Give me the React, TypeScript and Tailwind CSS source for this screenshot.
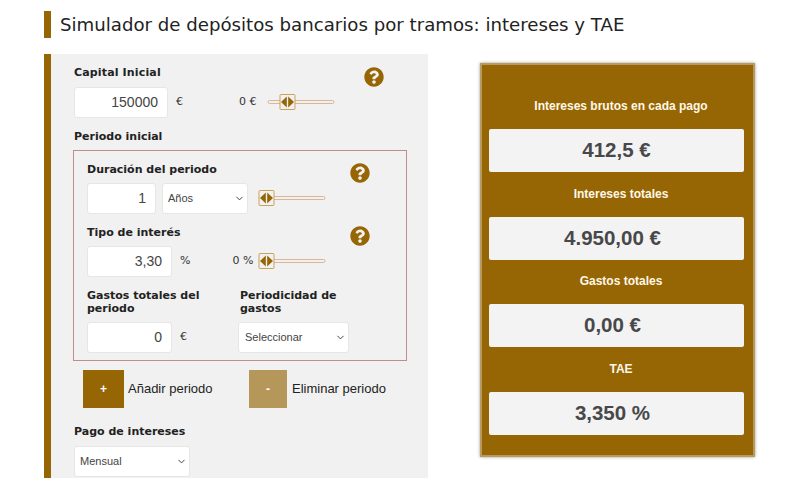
import { FaQuestionCircle } from "react-icons/fa";
import { ChevronDown } from "lucide-react";

const labelCls = "block font-['DejaVu_Sans',sans-serif] text-[11px] leading-[13px] font-bold text-[#222]";
const inputCls =
  "h-[31px] rounded-[3px] bg-white border border-[#e6e6e6] text-right pr-[9px] pb-[2px] font-['Liberation_Sans',sans-serif] text-[14px] text-[#444] outline-none";
const unitCls = "font-['DejaVu_Sans',sans-serif] text-[11px] text-[#333]";

function Select({ options, wrap, pad }: { options: string[]; wrap: string; pad: string }) {
  return (
    <div className={`relative h-[31px] ${wrap}`}>
      <select
        defaultValue={options[0]}
        className={`w-full h-full appearance-none rounded-[3px] bg-white border border-[#e6e6e6] font-['Liberation_Sans',sans-serif] text-[11px] text-[#444] outline-none ${pad}`}
      >
        {options.map((o) => (
          <option key={o}>{o}</option>
        ))}
      </select>
      <ChevronDown size={11} strokeWidth={2} className="absolute right-[3px] top-[10px] text-[#333] pointer-events-none" />
    </div>
  );
}

function Slider({ thumb, className }: { thumb: number; className: string }) {
  return (
    <svg width="68" height="18" viewBox="0 0 68 18" className={className}>
      <rect x="1" y="7.5" width="66" height="3" rx="1.5" fill="#f6efe6" stroke="#d6b8a0" strokeWidth="1" />
      <rect x={thumb} y="1.5" width="15" height="15" rx="1" fill="#f1f1f1" stroke="#c9a35e" strokeWidth="1" />
      <path
        d={`M${thumb + 6.8} 3.5 L${thumb + 1} 9 L${thumb + 6.8} 14.5 Z M${thumb + 8.2} 3.5 L${thumb + 14} 9 L${thumb + 8.2} 14.5 Z`}
        fill="#966605"
      />
    </svg>
  );
}

function Help({ className = "" }: { className?: string }) {
  return <FaQuestionCircle size={20} className={`text-[#966605] shrink-0 ${className}`} />;
}

function Result({ label, value, top, valuePad }: { label: string; value: string; top: string; valuePad: string }) {
  return (
    <div className={top}>
      <p className="pl-[9px] text-center font-['Liberation_Sans',sans-serif] text-[12px] leading-[14px] font-bold text-[#fff8e8]">{label}</p>
      <div
        className={`mt-[16px] h-[43px] rounded-[2px] bg-[#f3f3f3] flex items-center justify-center font-['Liberation_Sans',sans-serif] text-[20.5px] font-bold text-[#48484a] ${valuePad}`}
      >
        {value}
      </div>
    </div>
  );
}

export default function App() {
  return (
    <div className="w-[800px] h-[478px] overflow-hidden bg-white pl-[44px] pt-[11px]">
      <div className="flex items-center h-[27px] border-l-[7px] border-[#966605] pl-[9px]">
        <h1 className="font-['DejaVu_Sans',sans-serif] text-[18.16px] text-[#222] font-normal whitespace-nowrap">
          Simulador de depósitos bancarios por tramos: intereses y TAE
        </h1>
      </div>

      <div className="flex mt-[16px] items-start">
        <div className="w-[384px] h-[424px] shrink-0 border-l-[7px] border-[#966605] bg-[#f1f1f1] pl-[23px] pt-[12px]">
          <div className="flex items-start h-[19px] w-[310px] justify-between">
            <label className={`${labelCls} tracking-[0.15px]`}>Capital Inicial</label>
            <Help className="mt-[1px]" />
          </div>
          <div className="flex items-center mt-[2px]">
            <input readOnly value="150000" className={`${inputCls} w-[94px]`} />
            <span className={`${unitCls} ml-[8px]`}>€</span>
            <span className={`${unitCls} ml-[56px]`}>0 €</span>
            <Slider thumb={13} className="ml-[10px] -mt-[2px]" />
          </div>

          <label className={`${labelCls} mt-[12px]`}>Periodo inicial</label>

          <div className="mt-[7px] -ml-px w-[334px] h-[211px] border border-[#bb8f8f] pl-[13px] pt-[12px]">
            <div className="flex items-start h-[19px] w-[283px] justify-between">
              <label className={labelCls}>Duración del periodo</label>
              <Help />
            </div>
            <div className="flex items-center mt-[1px]">
              <input readOnly value="1" className={`${inputCls} w-[69px]`} />
              <Select options={["Años", "Meses"]} wrap="w-[86px] ml-[6px]" pad="pl-[5px]" />
              <Slider thumb={1} className="ml-[10px] -mt-[2px]" />
            </div>

            <div className="flex items-start h-[19px] w-[283px] justify-between mt-[12px]">
              <label className={labelCls}>Tipo de interés</label>
              <Help />
            </div>
            <div className="flex items-center mt-[1px]">
              <input readOnly value="3,30" className={`${inputCls} w-[85px]`} />
              <span className={`${unitCls} ml-[8px]`}>%</span>
              <span className={`${unitCls} ml-[42px]`}>0 %</span>
              <Slider thumb={1} className="ml-[5px] -mt-[1px]" />
            </div>

            <div className="flex mt-[12px]">
              <label className={`${labelCls} w-[153px]`}>
                Gastos totales del
                <br />
                periodo
              </label>
              <label className={labelCls}>
                Periodicidad de
                <br />
                gastos
              </label>
            </div>
            <div className="flex items-center mt-[7px]">
              <input readOnly value="0" className={`${inputCls} w-[85px]`} />
              <span className={`${unitCls} ml-[8px]`}>€</span>
              <Select options={["Seleccionar", "Mensual"]} wrap="w-[111px] ml-[51px]" pad="pl-[6px]" />
            </div>
          </div>

          <div className="flex items-center mt-[9px] ml-[9px] font-['Liberation_Sans',sans-serif] text-[13px] text-[#222]">
            <button className="w-[41px] h-[38px] bg-[#966605] text-white text-[12px] font-bold">+</button>
            <span className="ml-[4px] w-[121px]">Añadir periodo</span>
            <button className="w-[38px] h-[38px] bg-[#b5975a] text-white text-[12px] font-bold">-</button>
            <span className="ml-[5px]">Eliminar periodo</span>
          </div>

          <label className={`${labelCls} mt-[17px]`}>Pago de intereses</label>
          <Select options={["Mensual", "Trimestral"]} wrap="w-[116px] mt-[8px]" pad="pl-[5px]" />
        </div>

        <div className="ml-[52px] mt-[9px] w-[275px] h-[394px] shrink-0 bg-[#966605] border-2 border-[#b89a5e] shadow-[0_0_3px_#999] pl-[7px] pr-[9px] pt-[34px]">
          <Result label="Intereses brutos en cada pago" value="412,5 €" top="" valuePad="" />
          <Result label="Intereses totales" value="4.950,00 €" top="mt-[15px]" valuePad="pr-[8px]" />
          <Result label="Gastos totales" value="0,00 €" top="mt-[14px]" valuePad="pr-[8px]" />
          <Result label="TAE" value="3,350 %" top="mt-[15px]" valuePad="pr-[8px]" />
        </div>
      </div>
    </div>
  );
}
